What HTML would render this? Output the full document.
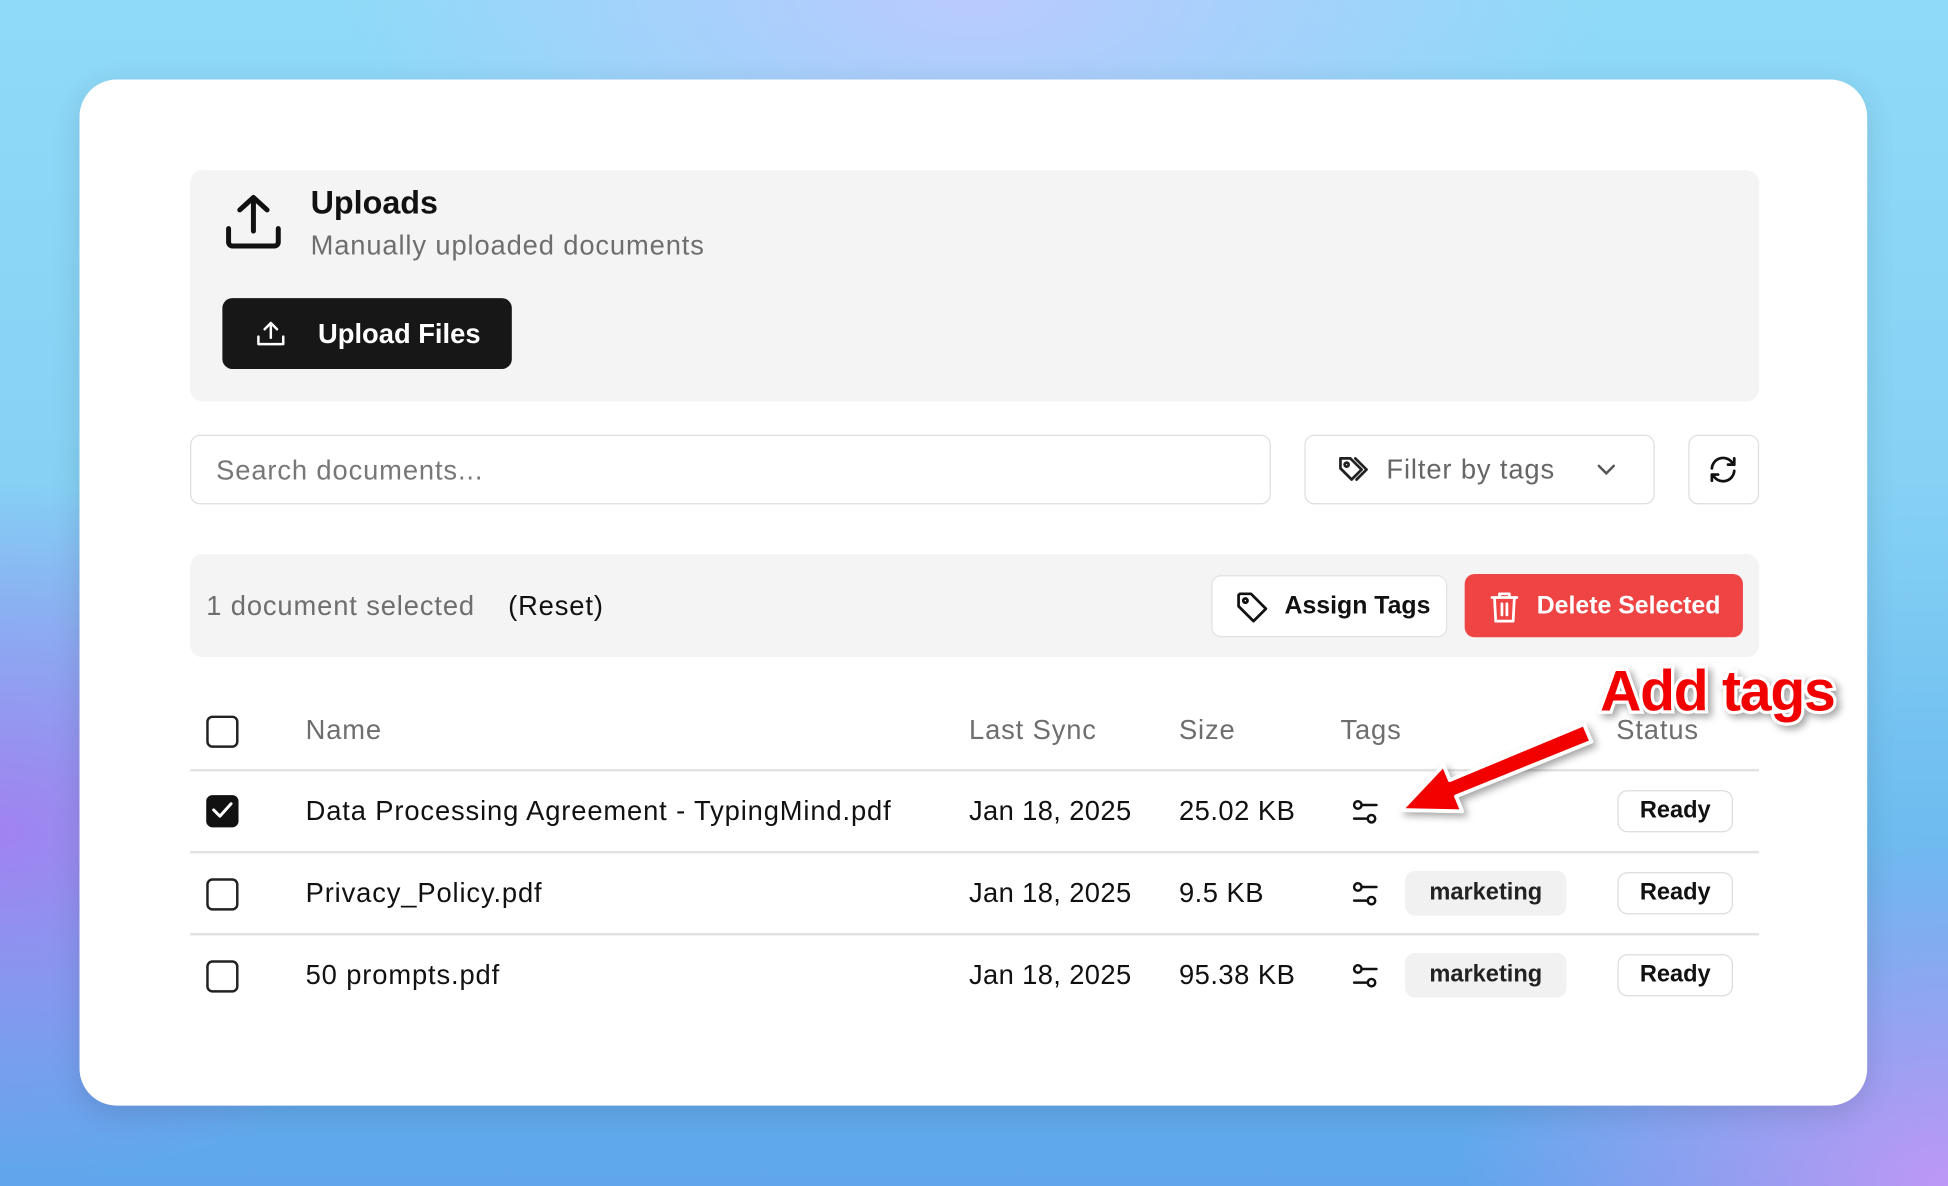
<!DOCTYPE html>
<html><head><meta charset="utf-8"><style>
html,body{margin:0;padding:0;width:1948px;height:1186px;overflow:hidden}
body{background:
 radial-gradient(ellipse 700px 500px at 0% 70%, rgba(170,120,240,0.85), rgba(170,120,240,0) 70%),
 radial-gradient(ellipse 700px 500px at 100% 100%, rgba(200,150,245,0.9), rgba(200,150,245,0) 70%),
 radial-gradient(ellipse 900px 400px at 50% 0%, rgba(190,200,255,0.9), rgba(190,200,255,0) 70%),
 linear-gradient(180deg,#8fdaf8 0%,#86d2f5 40%,#6ab8ef 75%,#5fa6ec 100%);font-family:"Liberation Sans",Arial,sans-serif}
#w{position:absolute;left:0;top:0;width:1568px;height:955px;transform:scale(1.2423);transform-origin:0 0}
.a{position:absolute}
.card{left:64px;top:64px;width:1439px;height:826px;background:#fff;border-radius:30px;box-shadow:0 6px 24px rgba(0,0,0,.12)}
.t{position:absolute;white-space:nowrap;line-height:1}
.r{letter-spacing:0.7px}
.gray{color:#6e6e6e}
svg{position:absolute;overflow:visible}
.ready{position:absolute;left:1302px;width:91px;height:32px;border:1.5px solid #dcdcdc;border-radius:8px;font-size:19px;font-weight:bold;color:#111;text-align:center;line-height:32px;box-sizing:content-box}
.chip{position:absolute;left:1131px;width:130px;height:36px;background:#f1f1f1;border-radius:8px;font-size:19px;font-weight:bold;color:#222;text-align:center;line-height:36px}
.cb{position:absolute;left:166px;width:22px;height:22px;border:2px solid #222;border-radius:5px}
.line{position:absolute;left:153px;width:1263px;height:1.5px;background:#e2e2e2}
</style></head><body><div id="w">
<div class="a card"></div>
<div class="a" style="left:153px;top:137px;width:1263px;height:186px;background:#f4f4f4;border-radius:10px"></div>
<svg style="left:180px;top:156px" width="48" height="46" viewBox="0 0 48 46" fill="none" stroke="#111" stroke-width="4" stroke-linecap="round" stroke-linejoin="round"><path d="M24 30V3M13 13L24 3L35 13"/><path d="M4 28v11a3 3 0 0 0 3 3h34a3 3 0 0 0 3-3V28"/></svg>
<div class="t" style="left:250px;top:150px;font-size:26px;font-weight:bold;color:#111">Uploads</div>
<div class="t gray r" style="left:250px;top:187px;font-size:22px">Manually uploaded documents</div>
<div class="a" style="left:179px;top:240px;width:233px;height:57px;background:#171717;border-radius:8px"></div>
<svg style="left:206px;top:258px" width="24" height="22" viewBox="0 0 24 22" fill="none" stroke="#fff" stroke-width="2" stroke-linecap="round" stroke-linejoin="round"><path d="M12 14V2M7 7l5-5 5 5"/><path d="M2 13v6h20v-6"/></svg>
<div class="t" style="left:256px;top:258px;font-size:22px;font-weight:bold;color:#fff">Upload Files</div>
<div class="a" style="left:153px;top:350px;width:868px;height:54px;border:1.5px solid #dedede;border-radius:8px"></div>
<div class="t r" style="left:174px;top:368px;font-size:22px;color:#777">Search documents...</div>
<div class="a" style="left:1050px;top:350px;width:280px;height:54px;border:1.5px solid #dedede;border-radius:8px"></div>
<svg style="left:1076px;top:366px" width="28" height="24" viewBox="0 0 28 24" fill="none" stroke="#222" stroke-width="2.2" stroke-linejoin="round" stroke-linecap="round"><path d="M3 3h8l9 9-8 8-9-9z"/><circle cx="8" cy="8" r="1.6"/><path d="M15 3l9 9-8 8"/></svg>
<div class="t r" style="left:1116px;top:367px;font-size:22px;color:#666">Filter by tags</div>
<svg style="left:1285px;top:373px" width="16" height="10" viewBox="0 0 16 10" fill="none" stroke="#555" stroke-width="2" stroke-linecap="round"><path d="M2 2l6 6 6-6"/></svg>
<div class="a" style="left:1359px;top:350px;width:55px;height:54px;border:1.5px solid #dedede;border-radius:8px"></div>
<svg style="left:1375px;top:366px" width="24" height="24" viewBox="0 0 24 24" fill="none" stroke="#111" stroke-width="2.2" stroke-linecap="round" stroke-linejoin="round"><path d="M3 11a9 9 0 0 1 16-5l2 2M21 3v5h-5"/><path d="M21 13a9 9 0 0 1-16 5l-2-2M3 21v-5h5"/></svg>
<div class="a" style="left:153px;top:446px;width:1263px;height:83px;background:#f4f4f4;border-radius:10px"></div>
<div class="t gray r" style="left:166px;top:477px;font-size:22px">1 document selected</div>
<div class="t r" style="left:409px;top:477px;font-size:22px;color:#111">(Reset)</div>
<div class="a" style="left:975px;top:463px;width:188px;height:48px;background:#fff;border:1.5px solid #e2e2e2;border-radius:8px"></div>
<svg style="left:995px;top:476px" width="26" height="26" viewBox="0 0 26 26" fill="none" stroke="#111" stroke-width="2.2" stroke-linejoin="round"><path d="M2 3v9l12 12 10-10L12 2H3z"/><circle cx="7.5" cy="7.5" r="1.7"/></svg>
<div class="t" style="left:1034px;top:478px;font-size:20px;color:#111;font-weight:bold">Assign Tags</div>
<div class="a" style="left:1179px;top:462px;width:224px;height:51px;background:#ef4444;border-radius:8px"></div>
<svg style="left:1200px;top:476px" width="22" height="26" viewBox="0 0 22 26" fill="none" stroke="#fff" stroke-width="2.2" stroke-linecap="round" stroke-linejoin="round"><path d="M1 5h20M7 5V2h8v3M3 5l1 19h14l1-19M9 10v9M13 10v9"/></svg>
<div class="t" style="left:1237px;top:478px;font-size:20px;color:#fff;font-weight:bold">Delete Selected</div>
<div class="cb" style="top:576px"></div>
<div class="t gray r" style="left:246px;top:577px;font-size:22px">Name</div>
<div class="t gray r" style="left:780px;top:577px;font-size:22px">Last Sync</div>
<div class="t gray r" style="left:949px;top:577px;font-size:22px">Size</div>
<div class="t gray r" style="left:1079px;top:577px;font-size:22px">Tags</div>
<div class="t gray r" style="left:1301px;top:577px;font-size:22px">Status</div>
<div class="line" style="top:619px"></div>
<div class="line" style="top:685px"></div>
<div class="line" style="top:751px"></div>
<div class="cb" style="top:640px;background:#111;border-color:#111"></div>
<svg style="left:170px;top:645px" width="18" height="14" viewBox="0 0 18 14" fill="none" stroke="#fff" stroke-width="2.4" stroke-linecap="round" stroke-linejoin="round"><path d="M2 7l5 5L16 2"/></svg>
<div class="cb" style="top:707px"></div>
<div class="cb" style="top:773px"></div>
<div class="t r" style="left:246px;top:642px;font-size:22px;color:#111">Data Processing Agreement - TypingMind.pdf</div>
<div class="t r" style="left:246px;top:708px;font-size:22px;color:#111">Privacy_Policy.pdf</div>
<div class="t r" style="left:246px;top:774px;font-size:22px;color:#111">50 prompts.pdf</div>
<div class="t" style="left:780px;top:642px;font-size:22px;color:#111;letter-spacing:0.3px">Jan 18, 2025</div>
<div class="t" style="left:780px;top:708px;font-size:22px;color:#111;letter-spacing:0.3px">Jan 18, 2025</div>
<div class="t" style="left:780px;top:774px;font-size:22px;color:#111;letter-spacing:0.3px">Jan 18, 2025</div>
<div class="t" style="left:949px;top:642px;font-size:22px;color:#111;letter-spacing:0.4px">25.02 KB</div>
<div class="t" style="left:949px;top:708px;font-size:22px;color:#111;letter-spacing:0.4px">9.5 KB</div>
<div class="t" style="left:949px;top:774px;font-size:22px;color:#111;letter-spacing:0.4px">95.38 KB</div>
<svg style="left:1088px;top:643px" width="22" height="22" viewBox="0 0 22 22" fill="none" stroke="#111" stroke-width="2" stroke-linecap="round"><circle cx="5" cy="5" r="3"/><path d="M8 5h12M2 16h11"/><circle cx="16" cy="16" r="3"/></svg>
<svg style="left:1088px;top:709px" width="22" height="22" viewBox="0 0 22 22" fill="none" stroke="#111" stroke-width="2" stroke-linecap="round"><circle cx="5" cy="5" r="3"/><path d="M8 5h12M2 16h11"/><circle cx="16" cy="16" r="3"/></svg>
<svg style="left:1088px;top:775px" width="22" height="22" viewBox="0 0 22 22" fill="none" stroke="#111" stroke-width="2" stroke-linecap="round"><circle cx="5" cy="5" r="3"/><path d="M8 5h12M2 16h11"/><circle cx="16" cy="16" r="3"/></svg>
<div class="chip" style="top:701px">marketing</div>
<div class="chip" style="top:767px">marketing</div>
<div class="ready" style="top:636px">Ready</div>
<div class="ready" style="top:702px">Ready</div>
<div class="ready" style="top:768px">Ready</div>
<svg style="left:0;top:0" width="1568" height="955" viewBox="0 0 1568 955"><defs><filter id="sh" x="-20%" y="-20%" width="140%" height="140%"><feDropShadow dx="3" dy="3" stdDeviation="3" flood-color="#000" flood-opacity="0.35"/></filter></defs>
<polygon filter="url(#sh)" points="1128,652 1177,653 1172,641 1281,597 1275,583 1167,628 1162,616" fill="#f20000" stroke="#fff" stroke-width="3" stroke-linejoin="round"/>
<text x="1288" y="572" filter="url(#sh)" font-family="Liberation Sans, Arial, sans-serif" font-weight="bold" font-size="46" fill="#f20000" stroke="#fff" stroke-width="5" paint-order="stroke" letter-spacing="-1">Add tags</text></svg>
</div></body></html>
